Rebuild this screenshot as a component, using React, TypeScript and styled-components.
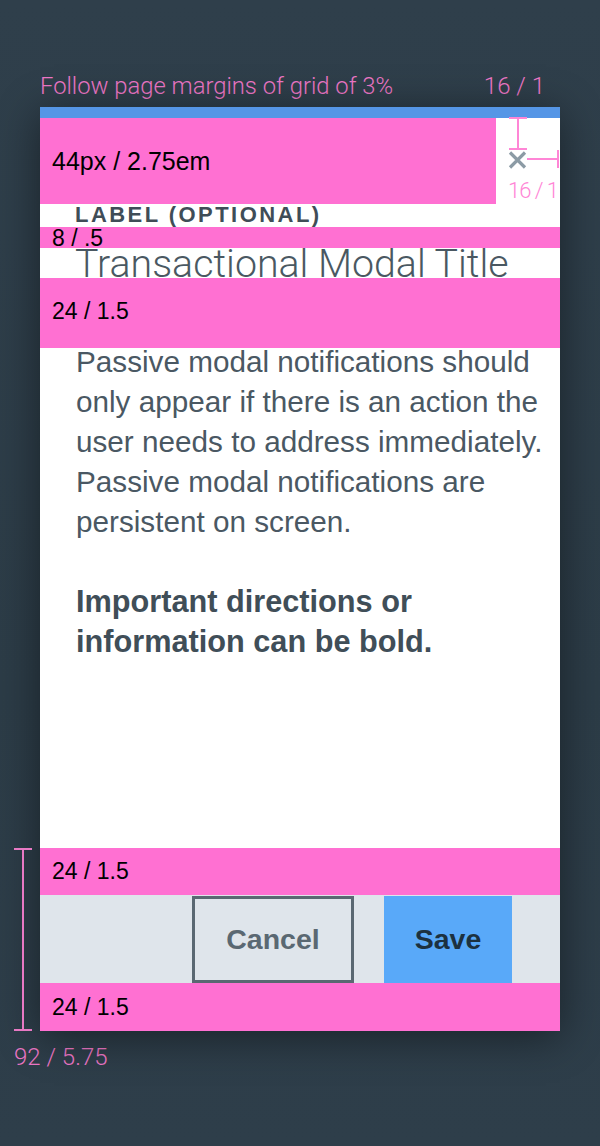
import React from "react";
import styled, { createGlobalStyle } from "styled-components";

const Global = createGlobalStyle`
  html, body { margin: 0; padding: 0; }
  body {
    background: #2e3e4a;
    width: 600px;
    height: 1146px;
    overflow: hidden;
  }
`;

const PINK = "#ff70d2";
const NOTE = "#ee77c7";

const Page = styled.div`
  width: 600px;
  height: 1146px;
  display: flex;
  flex-direction: column;
  padding-top: 72px;
  box-sizing: border-box;
  background: linear-gradient(180deg, #2f3f4b 0%, #2c3c47 60%, #2e3e4a 100%);
`;

const Caption = styled.div`
  display: flex;
  justify-content: space-between;
  align-items: center;
  height: 27px;
  padding: 0 55px 0 40px;
  margin-bottom: 8px;
  font-family: Roboto, "Liberation Sans", sans-serif;
  font-weight: 300;
  font-size: 23.8px;
  color: ${NOTE};
  white-space: nowrap;
`;

const CaptionRight = styled.span`
  font-size: 24px;
`;

const Modal = styled.div`
  position: relative;
  width: 520px;
  margin-left: 40px;
  display: flex;
  flex-direction: column;
  background: #ffffff;
  box-shadow: 0 6px 40px rgba(0, 0, 0, 0.45);
`;

const TopBar = styled.div`
  height: 11px;
  background: #5596e6;
`;

const HeaderRow = styled.div`
  display: flex;
  height: 86px;
`;

const Spacer = styled.div<{ $h: number; $w?: number; $size?: number }>`
  height: ${(p) => p.$h}px;
  width: ${(p) => (p.$w ? `${p.$w}px` : "auto")};
  flex: none;
  background: ${PINK};
  display: flex;
  align-items: center;
  padding-left: 12px;
  box-sizing: border-box;
  font-family: "Liberation Sans", Arial, sans-serif;
  font-size: ${(p) => p.$size ?? 23}px;
  color: #000;
  position: relative;
  z-index: 1;
`;

const SpacerText = styled.span<{ $dy?: number }>`
  line-height: 1;
  transform: translateY(${(p) => p.$dy ?? 0}px);
`;

const CloseArea = styled.div`
  position: relative;
  flex: 1;
`;

const CloseIcon = styled.svg`
  position: absolute;
  left: 12px;
  top: 33px;
  width: 19px;
  height: 18px;
`;

const VLine = styled.div`
  position: absolute;
  left: 21px;
  top: -1px;
  width: 2px;
  height: 31px;
  background: #ff86d6;
`;

const HCap = styled.div<{ $top: number; $left: number; $w: number }>`
  position: absolute;
  top: ${(p) => p.$top}px;
  left: ${(p) => p.$left}px;
  width: ${(p) => p.$w}px;
  height: 2px;
  background: #ff86d6;
`;

const VCap = styled.div<{ $top: number; $left: number; $h: number }>`
  position: absolute;
  top: ${(p) => p.$top}px;
  left: ${(p) => p.$left}px;
  width: 2px;
  height: ${(p) => p.$h}px;
  background: #ff86d6;
`;

const InnerNote = styled.span`
  position: absolute;
  left: 12px;
  top: 60px;
  font-family: Roboto, "Liberation Sans", sans-serif;
  font-weight: 300;
  font-size: 22px;
  letter-spacing: -1px;
  color: #ff86d6;
  white-space: nowrap;
`;

const Label = styled.div`
  height: 23px;
  line-height: 21px;
  padding-left: 35px;
  font-family: "Liberation Sans", Arial, sans-serif;
  font-weight: 700;
  font-size: 22px;
  letter-spacing: 2.45px;
  color: #3f4d57;
  white-space: nowrap;
`;

const Title = styled.h1`
  margin: 0;
  height: 30px;
  padding-left: 35px;
  font-family: Roboto, "Liberation Sans", sans-serif;
  font-weight: 300;
  font-size: 39.3px;
  line-height: 30px;
  color: #4a5862;
  white-space: nowrap;
  position: relative;
  top: 1px;
`;

const Body = styled.div`
  height: 500px;
  padding: 0 10px 0 36px;
  box-sizing: border-box;
  font-family: "Liberation Sans", Arial, sans-serif;
  color: #4a5863;
`;

const Paragraph = styled.p<{ $bold?: boolean }>`
  margin: ${(p) => (p.$bold ? "40px" : "-6px")} 0 0;
  font-size: ${(p) => (p.$bold ? 30.7 : 29.7)}px;
  font-weight: ${(p) => (p.$bold ? 700 : 400)};
  line-height: 40px;
  color: ${(p) => (p.$bold ? "#404e58" : "#4a5863")};
`;

const FooterGroup = styled.div`
  position: relative;
  display: flex;
  flex-direction: column;
`;

const Footer = styled.div`
  height: 88px;
  background: #dfe5eb;
  display: flex;
  align-items: center;
  justify-content: flex-end;
  gap: 30px;
  padding-right: 48px;
`;

const Button = styled.button<{ $primary?: boolean }>`
  height: 87px;
  width: ${(p) => (p.$primary ? 128 : 162)}px;
  box-sizing: border-box;
  border: ${(p) => (p.$primary ? "none" : "3px solid #5a6872")};
  background: ${(p) => (p.$primary ? "#59a9f9" : "transparent")};
  color: ${(p) => (p.$primary ? "#1c3140" : "#5a6872")};
  font-family: "Liberation Sans", Arial, sans-serif;
  font-weight: 700;
  font-size: 28.5px;
  padding: 0;
  cursor: pointer;
`;

const Bracket = styled.div`
  position: absolute;
  left: -26px;
  top: 0;
  bottom: 0;
  width: 18px;
  display: flex;
  flex-direction: column;
  align-items: center;
`;

const BracketCap = styled.div`
  width: 18px;
  height: 2px;
  background: #e879c4;
`;

const BracketLine = styled.div`
  flex: 1;
  width: 2px;
  background: #e879c4;
`;

const BottomNote = styled.div`
  margin-top: 12px;
  padding-left: 14px;
  font-family: Roboto, "Liberation Sans", sans-serif;
  font-weight: 300;
  font-size: 24px;
  color: ${NOTE};
`;

export default function App() {
  return (
    <>
      <Global />
      <Page>
        <Caption>
          <span>Follow page margins of grid of 3%</span>
          <CaptionRight>16 / 1</CaptionRight>
        </Caption>
        <Modal>
          <TopBar />
          <HeaderRow>
            <Spacer $h={86} $w={456} $size={25}>
              <SpacerText>44px / 2.75em</SpacerText>
            </Spacer>
            <CloseArea>
              <VLine />
              <HCap $top={-1} $left={13} $w={18} />
              <HCap $top={30} $left={13} $w={18} />
              <CloseIcon viewBox="0 0 19 18" aria-label="close">
                <path d="M2 1.5 L17 16.5 M17 1.5 L2 16.5" stroke="#8c9ba5" strokeWidth="3.2" fill="none" />
              </CloseIcon>
              <HCap $top={40} $left={31} $w={31} />
              <VCap $top={32} $left={61} $h={18} />
              <InnerNote>16 / 1</InnerNote>
            </CloseArea>
          </HeaderRow>
          <Label>LABEL (OPTIONAL)</Label>
          <Spacer $h={21}>
            <SpacerText $dy={1}>8 / .5</SpacerText>
          </Spacer>
          <Title>Transactional Modal Title</Title>
          <Spacer $h={70}>
            <SpacerText $dy={-2}>24 / 1.5</SpacerText>
          </Spacer>
          <Body>
            <Paragraph>
              Passive modal notifications should only appear if there is an action the user needs to address
              immediately. Passive modal notifications are persistent on screen.
            </Paragraph>
            <Paragraph $bold>Important directions or information can be bold.</Paragraph>
          </Body>
          <FooterGroup>
            <Bracket>
              <BracketCap />
              <BracketLine />
              <BracketCap />
            </Bracket>
            <Spacer $h={47}>
              <SpacerText>24 / 1.5</SpacerText>
            </Spacer>
            <Footer>
              <Button>Cancel</Button>
              <Button $primary>Save</Button>
            </Footer>
            <Spacer $h={48}>
              <SpacerText>24 / 1.5</SpacerText>
            </Spacer>
          </FooterGroup>
        </Modal>
        <BottomNote>92 / 5.75</BottomNote>
      </Page>
    </>
  );
}
